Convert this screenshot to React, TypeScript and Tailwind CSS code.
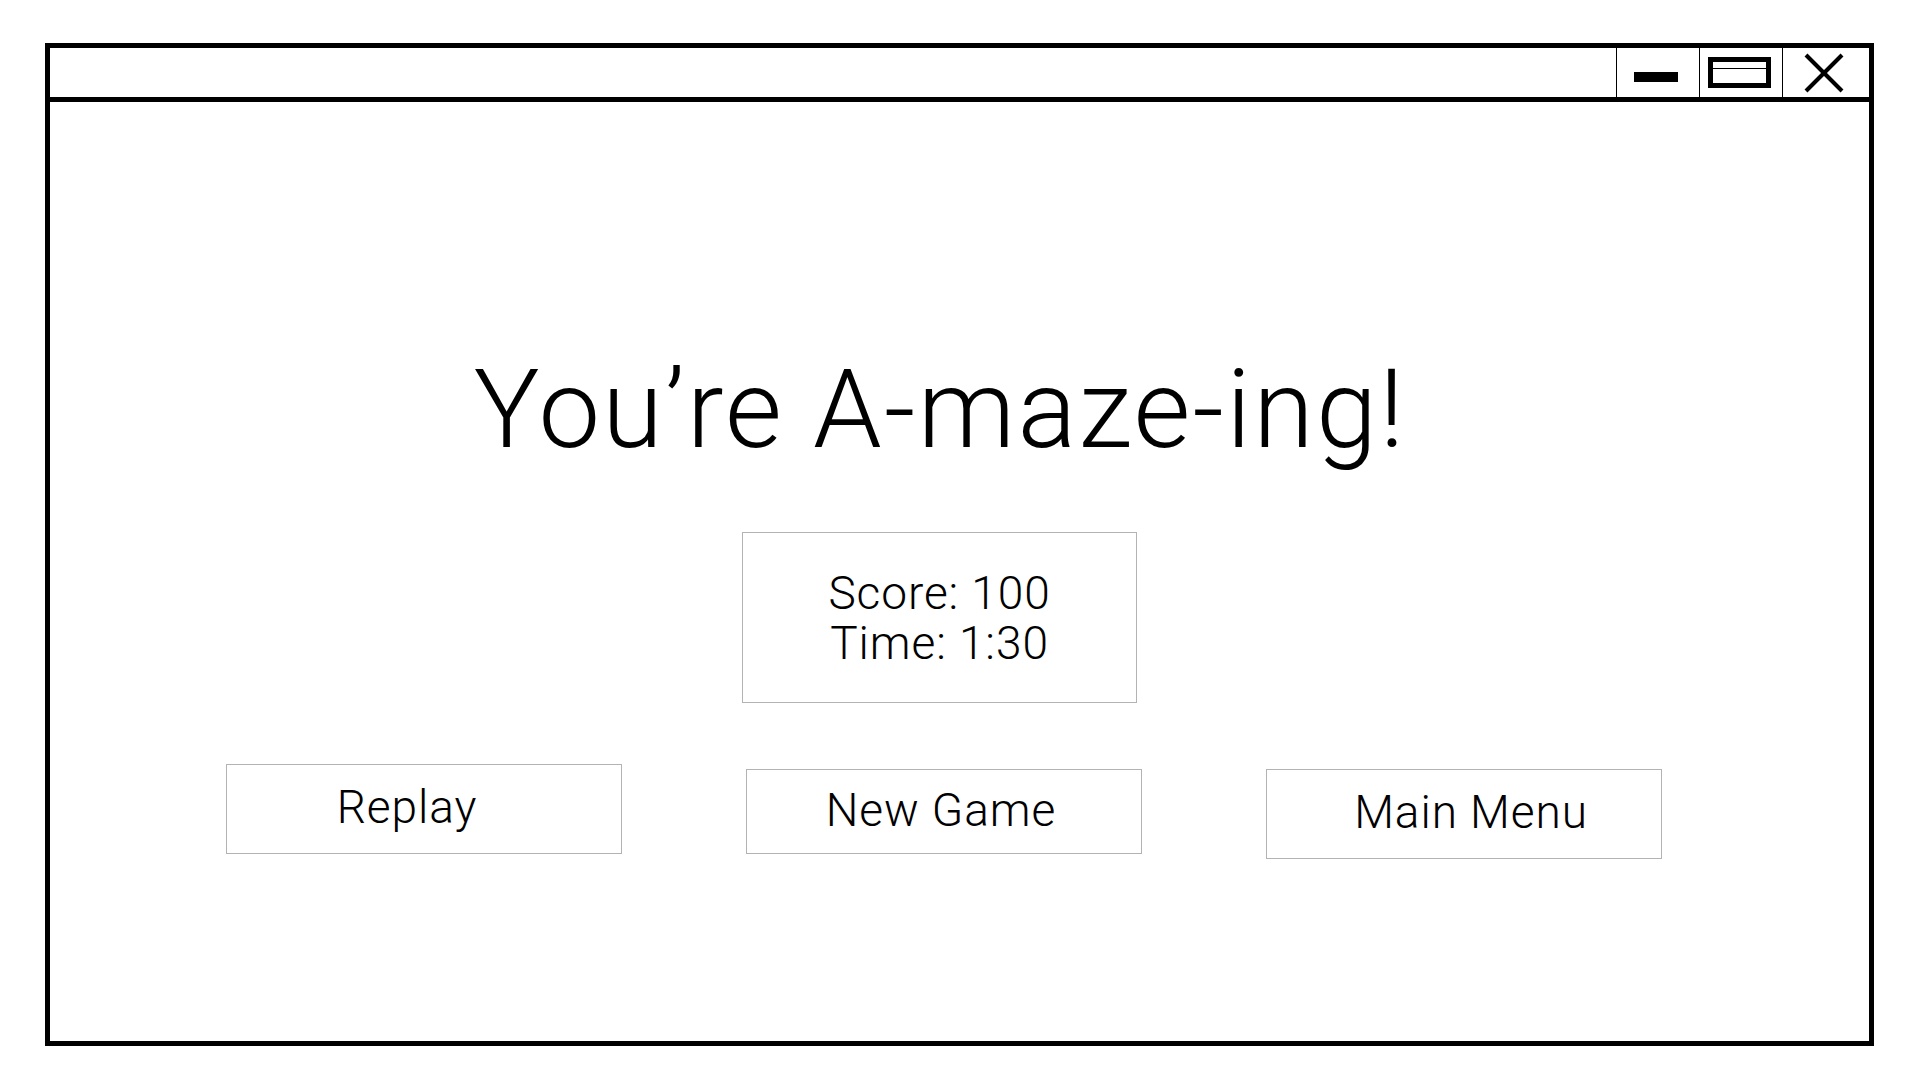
const Minimize = () => <div className="w-[44px] h-[10px] bg-black mt-[9px] -ml-[5px]" />;

const Maximize = () => (
  <div className="w-[63px] h-[31px] border-[5px] border-black -ml-[4px]">
    <div className="h-[7px] border-b border-black" />
  </div>
);

const Close = () => (
  <svg width="40" height="40" viewBox="0 0 40 40" className="-ml-[4px]">
    <line x1="2" y1="2" x2="38" y2="38" stroke="black" strokeWidth="4" />
    <line x1="38" y1="2" x2="2" y2="38" stroke="black" strokeWidth="4" />
  </svg>
);

const Button = ({ label, className }: { label: string; className: string }) => (
  <div
    className={`w-[396px] flex items-center justify-center border border-[#b3b3b3] text-[46px] leading-none tracking-[0.02em] pb-[4px] ${className}`}
  >
    {label}
  </div>
);

const App = () => {
  return (
    <div className="w-[1920px] h-[1080px] bg-white pt-[43px] pl-[45px] font-[Roboto,sans-serif] font-light text-black">
      <div className="w-[1829px] h-[1003px] border-[5px] border-black flex flex-col">
        {/* Title bar */}
        <div className="h-[54px] border-b-[5px] border-black flex justify-end">
          <div className="w-[83px] border-l border-black flex items-center justify-center">
            <Minimize />
          </div>
          <div className="w-[83px] border-l border-black flex items-center justify-center">
            <Maximize />
          </div>
          <div className="w-[87px] border-l border-black flex items-center justify-center">
            <Close />
          </div>
        </div>

        {/* Content */}
        <div className="flex-1 flex flex-col items-center pr-[31px]">
          <h1 className="mt-[253px] mr-[8px] text-[110px] leading-none font-light tracking-[0.02em]">
            You’re A-maze-ing!
          </h1>

          <div className="mt-[67px] mr-[9px] w-[395px] h-[171px] border border-[#b3b3b3] flex flex-col items-center justify-center text-[46px] leading-[50px] tracking-[0.02em]">
            <p>Score: 100</p>
            <p>Time: 1:30</p>
          </div>

          <div className="mt-[61px] flex items-start gap-[124px]">
            <Button label="Replay" className="h-[90px] pr-[34px]" />
            <Button label="New Game" className="h-[85px] mt-[5px] pr-[6px]" />
            <Button label="Main Menu" className="h-[90px] mt-[5px] pl-[14px]" />
          </div>
        </div>
      </div>
    </div>
  );
};

export default App;
